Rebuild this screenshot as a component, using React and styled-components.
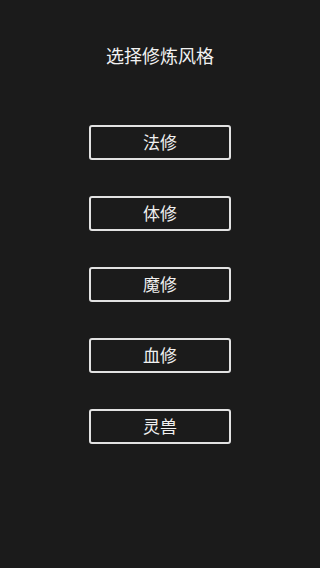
import React from "react";
import styled, { createGlobalStyle } from "styled-components";

const Global = createGlobalStyle`
  html, body { margin: 0; padding: 0; background: #1b1b1b; }
  body { font-family: "Noto Sans CJK SC", "Noto Sans", sans-serif; }
`;

const Page = styled.div`
  width: 320px;
  height: 568px;
  background: #1b1b1b;
  display: flex;
  flex-direction: column;
  align-items: center;
  box-sizing: border-box;
  padding-top: 43px;
`;

const Title = styled.h1`
  margin: 0;
  font-size: 18px;
  line-height: 24px;
  font-weight: 400;
  color: #f2f2f2;
`;

const List = styled.div`
  display: flex;
  flex-direction: column;
  gap: 36px;
  margin-top: 58px;
`;

const Choice = styled.button`
  width: 142px;
  height: 35px;
  box-sizing: border-box;
  border: 2px solid #e2e2e2;
  border-radius: 3px;
  background: #1b1b1b;
  color: #f0f0f0;
  font-family: inherit;
  font-size: 17px;
  line-height: 1;
  padding: 0 0 3px;
  display: flex;
  align-items: center;
  justify-content: center;
  cursor: pointer;
`;

const styles = ["法修", "体修", "魔修", "血修", "灵兽"];

export default function App() {
  return (
    <>
      <Global />
      <Page>
        <Title>选择修炼风格</Title>
        <List>
          {styles.map((s) => (
            <Choice key={s}>{s}</Choice>
          ))}
        </List>
      </Page>
    </>
  );
}
